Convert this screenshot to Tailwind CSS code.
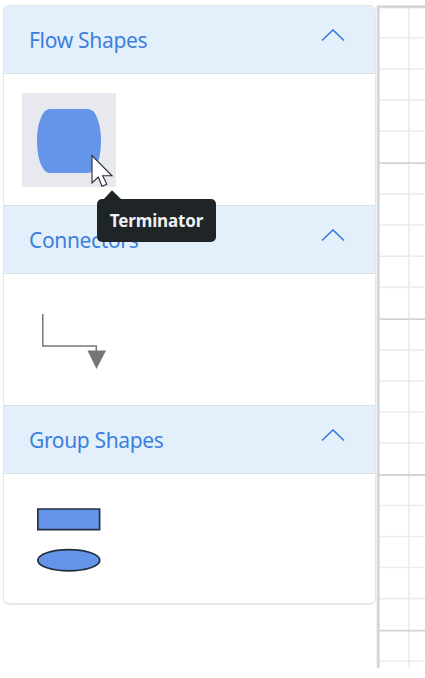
<!DOCTYPE html>
<html lang="en">
<head>
<meta charset="utf-8">
<title>Symbol palette</title>
<script src="https://cdn.jsdelivr.net/npm/@tailwindcss/browser@4"></script>
</head>
<body class="relative flex h-[678px] w-[425px] items-start overflow-hidden bg-white pt-[5px] font-['Noto_Sans',sans-serif]">
  <main class="ml-[3px] h-[600px] w-[373px] shrink-0 overflow-hidden rounded-[6px] border border-b-2 border-[#e1e8ea] bg-white">
    <section class="h-[199px]">
      <h2 class="flex h-[68px] items-center justify-between border-b border-[#d7e2e6] bg-[#e3effb] pl-[25px] pr-[30px] text-[21px] text-[#3c7fdf]"><span class="relative top-px tracking-[-0.3px]">Flow Shapes</span>
        <svg class="-mt-[10px] h-3 w-6" viewBox="0 0 24 12" fill="none" stroke="#387bdc" stroke-width="1.5"><path d="M1 11.5 12 .9l11 10.6"/></svg></h2>
      <div class="pl-[18px] pt-[19px]"><div class="flex h-[94px] w-[94px] items-center justify-center bg-[#e7e9ee] pt-px">
        <svg class="h-16 w-16" viewBox="0 0 64 64"><path d="M13 0H51C59 0 64 15 64 32S59 64 51 64H13C5 64 0 49 0 32S5 0 13 0Z" fill="#6495e9"/></svg></div></div>
    </section>
    <section class="h-[200px]">
      <h2 class="flex h-[69px] items-center justify-between border-y border-[#d7e2e6] bg-[#e3effb] pl-[25px] pr-[30px] text-[21px] text-[#3c7fdf]"><span class="relative top-px tracking-[-0.35px]">Connectors</span>
        <svg class="-mt-[10px] h-3 w-6" viewBox="0 0 24 12" fill="none" stroke="#387bdc" stroke-width="1.5"><path d="M1 11.5 12 .9l11 10.6"/></svg></h2>
      <div class="pl-[37px] pt-[40px]"><svg class="h-14 w-[66px]" viewBox="0 0 66 56"><path d="M1.8 0V32H55.3V38" fill="none" stroke="#777" stroke-width="1.5"/><path d="M46.5 36.5H65L55.5 55Z" fill="#757575"/></svg></div>
    </section>
    <section class="h-[198px]">
      <h2 class="flex h-[69px] items-center justify-between border-y border-[#d7e2e6] bg-[#e3effb] pl-[25px] pr-[30px] text-[21px] text-[#3c7fdf]"><span class="relative top-px tracking-[-0.35px]">Group Shapes</span>
        <svg class="-mt-[10px] h-3 w-6" viewBox="0 0 24 12" fill="none" stroke="#387bdc" stroke-width="1.5"><path d="M1 11.5 12 .9l11 10.6"/></svg></h2>
      <div class="pl-[33px] pt-[34px]"><svg class="h-[66px] w-16" viewBox="0 0 64 66" fill="#6495e9" stroke="#25313f" stroke-width="1.7"><path d="M.8 1H62.6V21.6H.8Z"/><ellipse cx="31.8" cy="52.2" rx="31" ry="10.6"/></svg></div>
    </section>
  </main>
  <aside class="h-[663px] w-[49px] shrink-0">
    <svg class="h-full w-full" viewBox="0 0 49 663">
      <path d="M33 3V663M3 32.8H49M3 64H49M3 95.1H49M3 126.3H49M3 189H49M3 220H49M3 251.2H49M3 282.4H49M3 345H49M3 376H49M3 407H49M3 438H49M3 500.5H49M3 531.5H49M3 562.5H49M3 593.6H49M3 656.3H49" stroke="#ececec" stroke-width="1.6"/>
      <path d="M3 158.2H49M3 314.1H49M3 470H49M3 625.6H49" stroke="#d4d4d4" stroke-width="1.8"/>
      <path d="M49 1.7H2.2V663" fill="none" stroke="#d6d6d6" stroke-width="3"/>
    </svg>
  </aside>
  <div class="absolute left-[97px] top-[199px] flex h-[43px] w-[119px] items-center justify-center rounded-[5px] bg-[#1f2427] text-[17px] font-bold text-[#eef0f2]"><span class="tracking-[-0.15px]">Terminator</span>
    <svg class="absolute -top-[9px] left-[6px] h-[10px] w-[19px]" viewBox="0 0 19 10"><path d="M0 10 9 .3 19 10Z" fill="#1f2427"/></svg>
  </div>
  <svg class="absolute left-[91px] top-[154px] h-[34px] w-[23px]" viewBox="0 0 23 34"><path d="M1 1.5V29L7.3 23 11 32.3 15.8 30.3 11.7 21.8H21Z" fill="#fff" stroke="#292d35" stroke-width="1.1"/></svg>
</body>
</html>
